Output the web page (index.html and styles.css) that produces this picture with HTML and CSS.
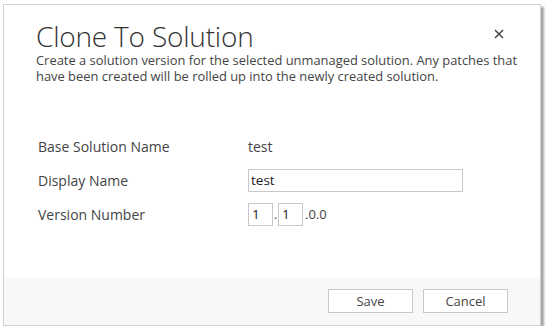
FILE: index.html
```html
<!DOCTYPE html>
<html>
<head>
<meta charset="utf-8">
<link rel="stylesheet" href="styles.css">
</head>
<body>
<div class="dialog">
  <div class="main">
    <div class="head">
      <h1 class="title">Clone To Solution</h1>
      <svg class="close" width="10" height="10" viewBox="0 0 10 10"><path d="M1 1 L9 9 M9 1 L1 9" stroke="#444" stroke-width="1.5" fill="none"/></svg>
    </div>
    <p class="desc">Create a solution version for the selected unmanaged solution. Any patches that have been created will be rolled up into the newly created solution.</p>
    <div class="form">
      <div class="row">
        <span class="label">Base Solution Name</span>
        <span class="value">test</span>
      </div>
      <div class="row">
        <span class="label">Display Name</span>
        <input class="text" type="text" value="test">
      </div>
      <div class="row">
        <span class="label">Version Number</span>
        <span class="version">
          <input class="num" type="text" value="1"><span class="dot">.</span><input class="num" type="text" value="1"><span class="rest">.0.0</span>
        </span>
      </div>
    </div>
  </div>
  <div class="footer">
    <button class="btn">Save</button>
    <button class="btn">Cancel</button>
  </div>
</div>
</body>
</html>
```

FILE: styles.css
```css
html, body {
  margin: 0;
  padding: 0;
  background: #ffffff;
}
body {
  padding: 4px 0 0 3px;
  font-family: "Open Sans", "Noto Sans", sans-serif;
  color: #444444;
}
.dialog {
  width: 536px;
  height: 320px;
  border: 1px solid #d0d0d0;
  background: #ffffff;
  box-shadow: 3px 3px 2px rgba(0, 0, 0, 0.35);
  display: flex;
  flex-direction: column;
  box-sizing: content-box;
}
.main {
  flex: 1;
  padding: 0 0 0 32px;
}
.head {
  display: flex;
  justify-content: space-between;
  align-items: flex-start;
  padding-top: 16px;
  padding-right: 36px;
}
.title {
  margin: 0;
  font-weight: 300;
  font-size: 28px;
  line-height: 30px;
  color: #333333;
  letter-spacing: -0.2px;
}
.close {
  display: block;
  margin-top: 8px;
}
.desc {
  margin: 1px 0 0 0;
  font-size: 12.9px;
  line-height: 16px;
  width: 500px;
  color: #444444;
  letter-spacing: 0;
}
.form {
  margin-top: 50px;
  display: flex;
  flex-direction: column;
  gap: 10px;
}
.row {
  display: flex;
  align-items: center;
  height: 24px;
  font-size: 14px;
}
.label {
  width: 210px;
  padding-left: 2px;
  color: #444;
}
.value {
  color: #444;
}
.text {
  width: 215px;
  height: 23px;
  box-sizing: border-box;
  border: 1px solid #c8c8c8;
  font-family: inherit;
  font-size: 13.5px;
  padding: 0 2px;
  color: #222;
  margin: 0;
}
.version {
  display: flex;
  align-items: center;
}
.num {
  width: 25px;
  height: 23px;
  box-sizing: border-box;
  border: 1px solid #c8c8c8;
  font-family: inherit;
  font-size: 13.5px;
  padding: 0 3px;
  color: #222;
  margin: 0;
}
.dot {
  width: 5px;
  text-align: center;
  font-size: 12px;
}
.rest {
  margin-left: 2px;
  font-size: 13px;
}
.footer {
  height: 47px;
  background: #f8f8f8;
  display: flex;
  justify-content: flex-end;
  align-items: flex-start;
  gap: 10px;
  padding: 11px 32px 0 0;
  box-sizing: border-box;
}
.btn {
  width: 85px;
  height: 24px;
  border: 1px solid #c8c8c8;
  background: #ffffff;
  font-family: inherit;
  font-size: 13px;
  color: #444;
  margin: 0;
}
```
